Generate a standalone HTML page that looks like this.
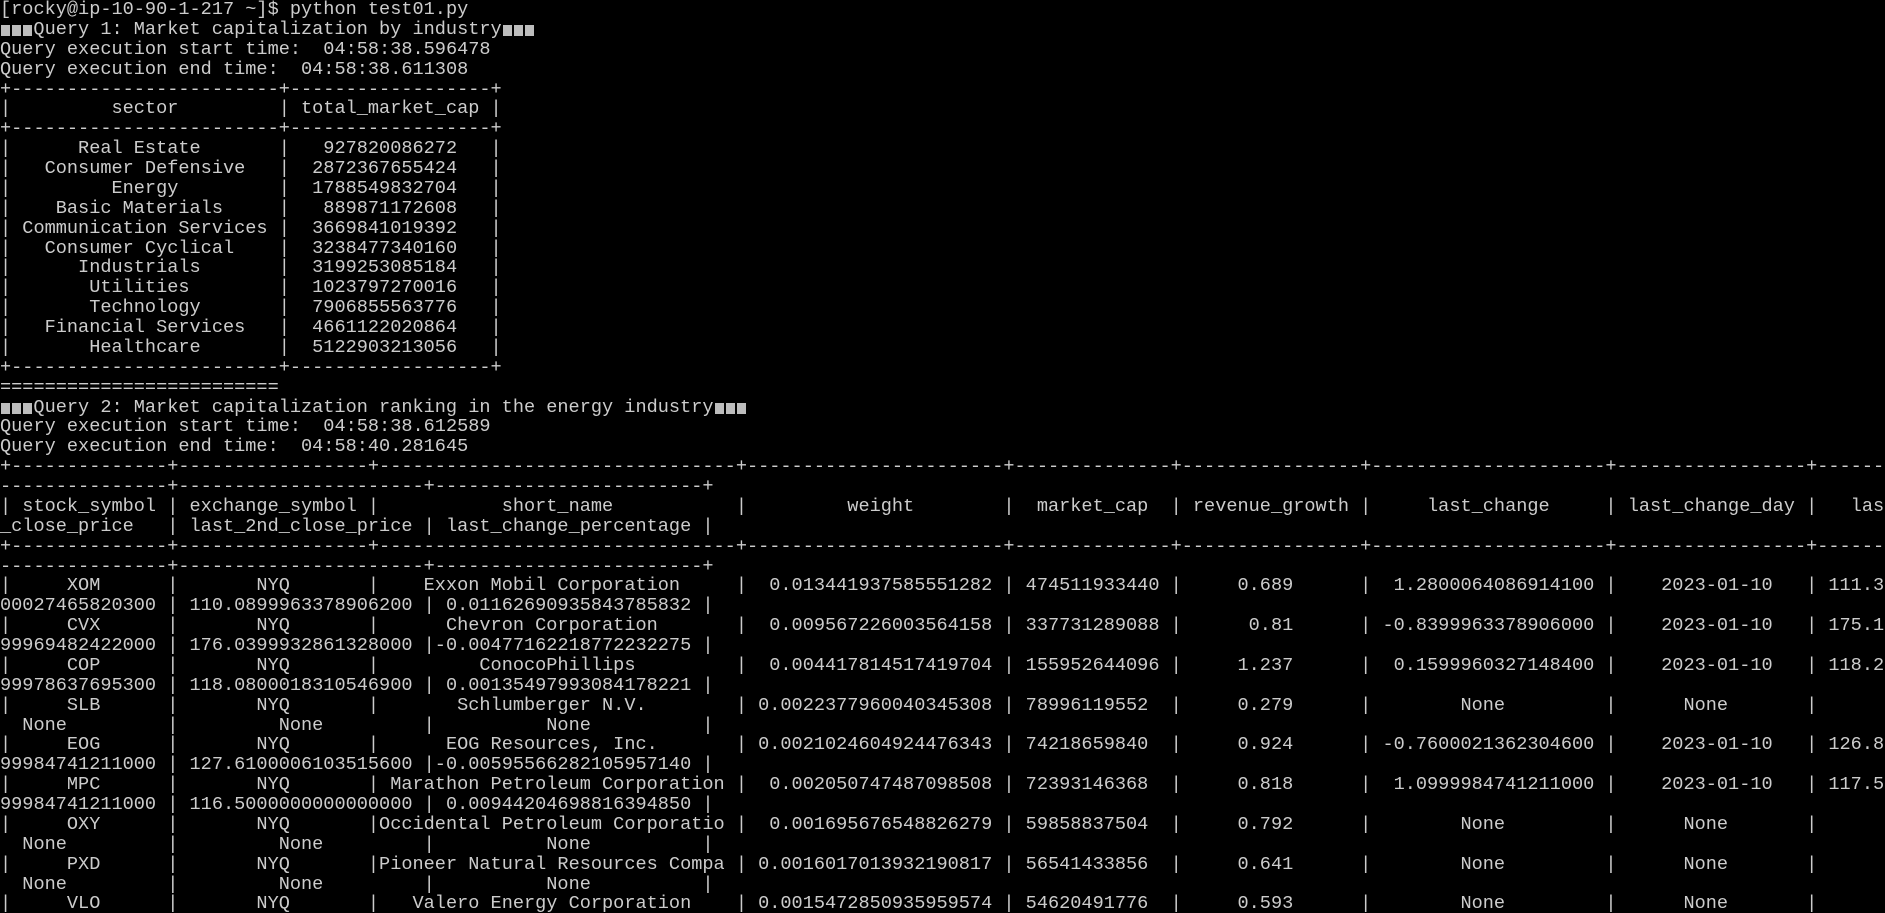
<!DOCTYPE html>
<html><head><meta charset="utf-8"><style>
html,body{margin:0;padding:0;background:#000;width:1885px;height:913px;overflow:hidden}
pre{margin:0;padding:0 0 0 0;font-family:"Liberation Mono","DejaVu Sans Mono",monospace;font-size:18.58px;line-height:19.87px;color:#cccccc;white-space:pre}
.b{display:inline-block;width:11.15px;height:19.87px;vertical-align:top;position:relative}
.b:after{content:"";position:absolute;left:1px;top:5px;width:9px;height:11px;background:#bdbdbd}
</style></head><body><pre>[rocky@ip-10-90-1-217 ~]$ python test01.py
<span class="b"></span><span class="b"></span><span class="b"></span>Query 1: Market capitalization by industry<span class="b"></span><span class="b"></span><span class="b"></span>
Query execution start time:  04:58:38.596478
Query execution end time:  04:58:38.611308
+------------------------+------------------+
|         sector         | total_market_cap |
+------------------------+------------------+
|      Real Estate       |   927820086272   |
|   Consumer Defensive   |  2872367655424   |
|         Energy         |  1788549832704   |
|    Basic Materials     |   889871172608   |
| Communication Services |  3669841019392   |
|   Consumer Cyclical    |  3238477340160   |
|      Industrials       |  3199253085184   |
|       Utilities        |  1023797270016   |
|       Technology       |  7906855563776   |
|   Financial Services   |  4661122020864   |
|       Healthcare       |  5122903213056   |
+------------------------+------------------+
=========================
<span class="b"></span><span class="b"></span><span class="b"></span>Query 2: Market capitalization ranking in the energy industry<span class="b"></span><span class="b"></span><span class="b"></span>
Query execution start time:  04:58:38.612589
Query execution end time:  04:58:40.281645
+--------------+-----------------+--------------------------------+-----------------------+--------------+----------------+---------------------+-----------------+-------
---------------+----------------------+------------------------+
| stock_symbol | exchange_symbol |           short_name           |         weight        |  market_cap  | revenue_growth |     last_change     | last_change_day |   last
_close_price   | last_2nd_close_price | last_change_percentage |
+--------------+-----------------+--------------------------------+-----------------------+--------------+----------------+---------------------+-----------------+-------
---------------+----------------------+------------------------+
|     XOM      |       NYQ       |    Exxon Mobil Corporation     |  0.013441937585551282 | 474511933440 |     0.689      |  1.2800064086914100 |    2023-01-10   | 111.37
00027465820300 | 110.0899963378906200 | 0.01162690935843785832 |
|     CVX      |       NYQ       |      Chevron Corporation       |  0.009567226003564158 | 337731289088 |      0.81      | -0.8399963378906000 |    2023-01-10   | 175.19
99969482422000 | 176.0399932861328000 |-0.00477162218772232275 |
|     COP      |       NYQ       |         ConocoPhillips         |  0.004417814517419704 | 155952644096 |     1.237      |  0.1599960327148400 |    2023-01-10   | 118.23
99978637695300 | 118.0800018310546900 | 0.00135497993084178221 |
|     SLB      |       NYQ       |       Schlumberger N.V.        | 0.0022377960040345308 | 78996119552  |     0.279      |        None         |      None       |
  None         |         None         |          None          |
|     EOG      |       NYQ       |      EOG Resources, Inc.       | 0.0021024604924476343 | 74218659840  |     0.924      | -0.7600021362304600 |    2023-01-10   | 126.84
99984741211000 | 127.6100006103515600 |-0.00595566282105957140 |
|     MPC      |       NYQ       | Marathon Petroleum Corporation |  0.002050747487098508 | 72393146368  |     0.818      |  1.0999984741211000 |    2023-01-10   | 117.59
99984741211000 | 116.5000000000000000 | 0.00944204698816394850 |
|     OXY      |       NYQ       |Occidental Petroleum Corporatio |  0.001695676548826279 | 59858837504  |     0.792      |        None         |      None       |
  None         |         None         |          None          |
|     PXD      |       NYQ       |Pioneer Natural Resources Compa | 0.0016017013932190817 | 56541433856  |     0.641      |        None         |      None       |
  None         |         None         |          None          |
|     VLO      |       NYQ       |   Valero Energy Corporation    | 0.0015472850935959574 | 54620491776  |     0.593      |        None         |      None       |
</pre></body></html>
